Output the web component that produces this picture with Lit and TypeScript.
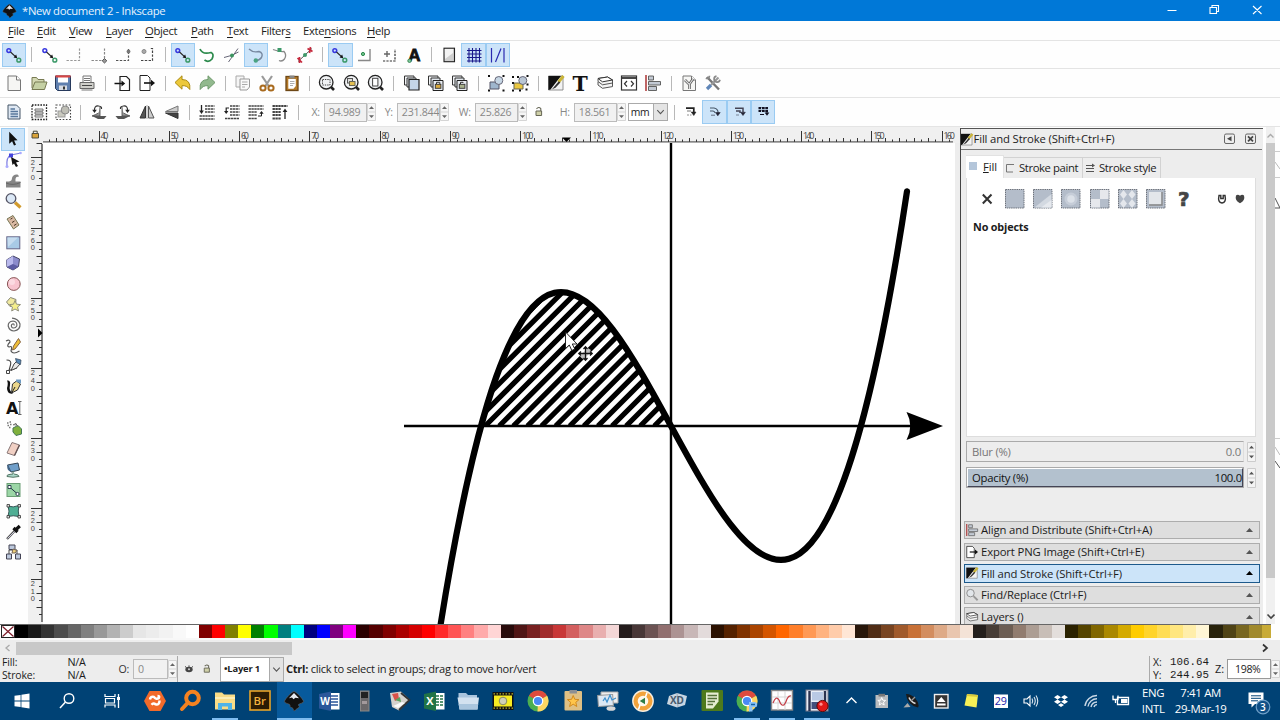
import { LitElement, html, svg, css, nothing } from "lit";
import { customElement, property } from "lit/decorators.js";
import { classMap } from "lit/directives/class-map.js";
import { styleMap } from "lit/directives/style-map.js";

// the small "node -> node" glyph is shared by several snap buttons
const snap = svg`
  <circle cx="6.8" cy="7.6" r="1.9" fill="none" stroke="#3838e0" stroke-width="1.5"/>
  <circle cx="16.8" cy="17.2" r="1.9" fill="none" stroke="#3d9a6a" stroke-width="1.5"/>
  <path d="M8.5 9L13.5 13.6" stroke="#222" stroke-width="1.1"/>
  <path d="M15.2 15.2L11.6 14.4L14.2 11.6Z" fill="#111"/>`;
const chrome = svg`
  <circle cx="12" cy="12" r="10.5" fill="#4caf50"/>
  <path d="M12 12L2.9 6.8A10.5 10.5 0 0 1 21.1 6.8Z" fill="#dd4b3e"/>
  <path d="M12 12L21.1 6.8A10.5 10.5 0 0 1 11.5 22.5Z" fill="#fdd663"/>
  <circle cx="12" cy="12" r="5.3" fill="#fff"/><circle cx="12" cy="12" r="4.1" fill="#4a8af4"/>`;
const inkscape = svg`
  <path d="M12 2.5C10 2.5 3 10 2.5 12.2C2.2 14 5.5 14.4 7.5 15.4C9 16.3 7 17 8.5 18C10 19 11 18.6 11.3 20.4C11.5 22 13 22 14 20.6C14.6 19.6 17 19 17.3 17.8C17.6 16.6 15.6 16.4 16.6 15.4C18 14.4 21.8 14 21.5 12.2C21 10 14 2.5 12 2.5Z" fill="#111" stroke="#666" stroke-width=".6"/>
  <path d="M12 4L7 9.3L10 8.6L11.5 10.2L13.4 8.7L17 9.3Z" fill="#e6eaf0"/>`;
const page = svg`<path d="M6 5H14.5L18.5 9V19.5H6Z" fill="#f6f6f4" stroke="#777"/><path d="M14.5 5V9H18.5" fill="#fff" stroke="#777"/>`;
const lens = svg`<circle cx="11.2" cy="11.2" r="6.8" fill="#f0f2f4" stroke="#222" stroke-width="1.3"/><path d="M16 16L19 19" stroke="#222" stroke-width="2.6"/>`;
const align = svg`<path d="M5 4V20" stroke="#a33" stroke-width="1.5"/><path d="M7.5 5H12.5V9H7.5ZM7.5 10.5H19.5V14H7.5ZM7.5 15.5H15.5V19.5H7.5Z" fill="#c3cad4" stroke="#555" stroke-width=".9"/>`;
const brush = svg`<path d="M4.5 5H19V19H4.5Z" fill="#f3f3f3" stroke="#777" stroke-width=".8"/><path d="M4.5 5H17L6.5 18.5L4.5 19Z" fill="#111"/><path d="M19.5 5L14.5 11" stroke="#c9b437" stroke-width="3"/><path d="M14.8 10.2L8 18.2L11.5 16.8L16.4 11.5Z" fill="#333"/>`;
const layers = svg`<path d="M5 7.5L14.5 6L19.5 9L9.5 10.8Z" fill="#fff" stroke="#333"/><path d="M5 7.5V10.5L9.5 13.8L19.5 12V9M5 10.8V14L9.5 17.3L19.5 15.6V12" fill="#f4f4f4" stroke="#444" stroke-width=".9"/><path d="M5 7.5L14.5 6L19.5 9L9.5 10.8Z" fill="#fff" stroke="#333"/>`;
const exportPage = svg`<path d="M5 4.5H12.5L15 7V19.5H5Z" fill="#fff" stroke="#222"/><path d="M9 12H18" stroke="#111" stroke-width="1.6"/><path d="M16 8.8L20 12L16 15.2Z" fill="#111"/>`;
const pick = svg`<path d="M8.2 4.8V16.8L11.1 14.2L13 18.6L15 17.7L13.1 13.5L16.6 13.2Z" fill="#111"/>`;
const copies = svg`<path d="M4.5 5H14V14H4.5Z" fill="#f1f3f6" stroke="#333"/><path d="M7 7H16V16H7Z" fill="#e3e8ee" stroke="#333"/>`;
const hatchBox = svg`<rect x="2.5" y="2.5" width="18.5" height="18.5" fill="#b4bdca" stroke="#6d727c" stroke-dasharray="1.5 .7"/>`;
const moveLines = svg`<path d="M10 6H19.5M10 9H19.5M10 12H19.5M4.5 16H19.5M4.5 19H19.5" stroke="#444" stroke-width="1.6" stroke-dasharray="2.4 .5"/>`;

const icons: Record<string, unknown> = {
  snap,
  inkscape,
  bbox: svg`<path d="M4.5 17.5H17.5V5.5" fill="none" stroke="#999" stroke-width="1.2" stroke-dasharray="2.4 1.4"/>`,
  bboxCorner: svg`<path d="M4.5 17.5H17.5V5.5" fill="none" stroke="#888" stroke-width="1.2" stroke-dasharray="2.4 1.4"/><path d="M17.5 15.5L19.8 17.8L17.5 20L15.2 17.8Z" fill="#999" stroke="#555"/>`,
  bboxEdge: svg`<path d="M5 17.5H17.5V6" fill="none" stroke="#555" stroke-width="1.2" stroke-dasharray="2.4 1.4"/><circle cx="17.5" cy="8.5" r="1.9" fill="#777"/>`,
  bboxMid: svg`<path d="M6 17.5H17.5V5.5H15" fill="none" stroke="#444" stroke-width="1.2" stroke-dasharray="2.4 1.4"/><circle cx="9" cy="8.5" r="2" fill="#aaa" stroke="#888"/>`,
  path: svg`<path d="M5 6Q7.5 12 16 9.5Q19.5 11 17 16Q13.5 20 9.5 17" fill="none" stroke="#2c8a4c" stroke-width="1.7"/>`,
  cross: svg`<path d="M4 14.5Q12 13 18.5 9M8.5 19L18 5.5" stroke="#667" fill="none"/><circle cx="12" cy="12.5" r="2" fill="#3c9460"/>`,
  cusp: svg`<path d="M5 6Q9 10 15 8.5Q19.5 10 17.5 14.5Q15 18 10.5 17.5" stroke="#7788a0" fill="none" stroke-width="1.4"/><circle cx="11.8" cy="17.5" r="2.2" fill="#4aa382"/>`,
  smooth: svg`<path d="M5 6.5Q11 9 16 8.5Q19 12 16.5 16Q14 19 11 17.5" stroke="#888" fill="none" stroke-width="1.3"/><rect x="9.5" y="5" width="4" height="4" fill="#3d9a6a"/>`,
  midline: svg`<path d="M5 18.5L19 5.5" stroke="#555"/><path d="M4.5 15L9 19.5M14.5 5.5L19.5 8.5M17.5 4L16.5 10M6.5 14V20" stroke="#c5283c" stroke-width="1.7"/><circle cx="12" cy="12" r="2" fill="#3d9a6a"/>`,
  objMid: svg`<path d="M5 17.5H17V6" stroke="#888" fill="none" stroke-width="1.4"/><circle cx="10" cy="11" r="1.6" fill="#6fc28d" stroke="#2c8a4c"/>`,
  rotCenter: svg`<path d="M6 18H18V6" fill="none" stroke="#333" stroke-width="1.2" stroke-dasharray="2.2 1.2"/><path d="M7 11H13M10 8V14" stroke="#666" stroke-width="1.4"/>`,
  bigA: svg`<text x="6.3" y="18" font-family="Liberation Sans, sans-serif" font-weight="700" font-size="17" fill="#111" stroke="#111" stroke-width=".8">A</text><circle cx="7.5" cy="17.8" r="1.7" fill="#7cc79a" stroke="#3d8a5a"/>`,
  pageBorder: svg`<rect x="7" y="5.2" width="10.5" height="13.5" fill="#cfcfcf" stroke="#222" stroke-width="1.1"/><path d="M7.8 6H16V10L8 16Z" fill="#f3f3f3"/>`,
  grid: svg`<path d="M7 5V19.5M10.5 5V19.5M14 5V19.5M17.5 5V19.5M5 7.5H19.5M5 11H19.5M5 14.5H19.5M5 18H19.5" stroke="#1a1a8c" stroke-width="1.1"/>`,
  guides: svg`<path d="M5.5 5V19.5M18 5V19.5M9.5 19L15 5.5" stroke="#2a2ab0" stroke-width="1.2"/>`,

  new: page,
  open: svg`<path d="M5 17V6.5H9.5L11 8.5H17V11" fill="#d3d8b2" stroke="#777a52"/><path d="M5 18.5L8 11H20L17.5 18.5Z" fill="#c5d0a4" stroke="#777a52"/>`,
  save: svg`<path d="M4.5 5H19.5V19.5H6.5L4.5 17.5Z" fill="#5f7fae" stroke="#26395c"/><path d="M7 5.5H17V11.5H7Z" fill="#fff"/><path d="M4.5 5.4H19.5" stroke="#d64545" stroke-width="2.2"/><path d="M8 14.5H16V19H8Z" fill="#d7dbe2"/><path d="M13 15.5V18.5" stroke="#222" stroke-width="1.8"/>`,
  print: svg`<path d="M8 11V5H16V11" fill="#fff" stroke="#777"/><path d="M5 11.5H19V17.5H5Z" fill="#cfcfca" stroke="#666"/><path d="M6.5 19H17.5M9 7.5H15M9 9.5H15" stroke="#777"/><path d="M7 14.5H17" stroke="#444"/>`,
  import: svg`<path d="M9 5.5H15.5L18.5 8.5V19.5H9Z" fill="#fff" stroke="#222" stroke-width="1.2"/><path d="M3.5 12.5H12" stroke="#111" stroke-width="1.5"/><path d="M10.5 9.5L14.2 12.5L10.5 15.5Z" fill="#111"/>`,
  export: exportPage,
  undo: svg`<path d="M4 11.5L11 4.8V8.5Q20 8.5 18.8 18.5Q16 14.2 11 14.7V18.2Z" fill="#ecc83a" stroke="#ab8b12"/>`,
  redo: svg`<path d="M20 11.5L13 4.8V8.5Q4 8.5 5.2 18.5Q8 14.2 13 14.7V18.2Z" fill="#92b98e" stroke="#6f9a6c"/>`,
  copy: svg`<path d="M5 5H13V16H5Z" fill="#f5f5f5" stroke="#aaa"/><path d="M9 8H18.5V16L16 19H9Z" fill="#fafafa" stroke="#999"/><path d="M11 11H16.5M11 13.5H16.5M11 16H14" stroke="#aaa"/>`,
  cut: svg`<path d="M7 5L14 15.5M17 5L10 15.5" stroke="#9a9a9a" stroke-width="2.2"/><circle cx="8" cy="17" r="2.6" fill="none" stroke="#a86a1e" stroke-width="2"/><circle cx="16" cy="17" r="2.6" fill="none" stroke="#a86a1e" stroke-width="2"/>`,
  paste: svg`<rect x="6" y="5.5" width="12" height="14" fill="#b47a28" stroke="#6d4716" stroke-width="1.3"/><path d="M8.3 8H15.8V15L13.5 17.8H8.3Z" fill="#fff"/><path d="M9.5 4.5H14.5V7.5H9.5Z" fill="#888"/><path d="M10 10.5H14.5M10 12.5H14.5M10 14.5H13" stroke="#999" stroke-width=".8"/>`,
  zoomSel: svg`${lens}<rect x="7.5" y="8.5" width="7.5" height="5.5" fill="none" stroke="#444" stroke-dasharray="1.4 1"/>`,
  zoomDraw: svg`${lens}<rect x="7.5" y="7.5" width="5" height="4.5" fill="#ddd" stroke="#555"/><rect x="9.5" y="10.5" width="5.5" height="4" fill="#e5c052" stroke="#665"/>`,
  zoomPage: svg`${lens}<rect x="8.6" y="7.3" width="5.3" height="7.7" fill="#fff" stroke="#444"/>`,
  duplicate: svg`${copies}<path d="M9 8.5H19V19H9Z" fill="#c4d5e8" stroke="#222" stroke-width="1.2"/>`,
  clone: svg`${copies}<path d="M9 9.5H19V19.5H9Z" fill="#e9edf2" stroke="#222"/><rect x="11.3" y="13.3" width="5.6" height="4" fill="#d9a93c" stroke="#333" stroke-width=".9"/><path d="M12.5 13V11.3H15.8V13" stroke="#333" fill="none"/>`,
  unlink: svg`${copies}<path d="M9 9.5H19V19.5H9Z" fill="#e9edf2" stroke="#222"/><rect x="11.3" y="13.3" width="5.6" height="4" fill="#a9b28c" stroke="#333" stroke-width=".9"/><path d="M12.5 13V11.3H15V12" stroke="#333" fill="none"/>`,
  group: svg`<path d="M6 11H15V18H6Z" fill="#9fb6cd" stroke="#556"/><circle cx="14.8" cy="9.5" r="4" fill="#c6d6e4" stroke="#667"/><path d="M4 5H6M18.5 5H20.5M4 19.5H6M18.5 19.5H20.5" stroke="#111" stroke-width="2"/>`,
  ungroup: svg`<path d="M6 12H15V18H6Z" fill="#ebc840" stroke="#665"/><circle cx="14.8" cy="9.5" r="4" fill="#b9c6d4" stroke="#667"/><path d="M4 6H6M9 6H11M18.5 5H20.5M4 12H6M4 19.5H6M11 19.5H13M17.5 18.5H19.5M18.5 13.5H20.5" stroke="#111" stroke-width="2"/>`,
  brush,
  text: svg`<text x="4.6" y="19.6" font-family="DejaVu Serif, serif" font-weight="700" font-size="20.5" fill="#111">T</text>`,
  layers,
  xml: svg`<rect x="4.5" y="5" width="15" height="14" fill="#fff" stroke="#333" stroke-width="1.2"/><path d="M5 7H19" stroke="#333" stroke-width="1.8"/><path d="M10 10L7.5 12.8L10 15.5M14 10L16.5 12.8L14 15.5" fill="none" stroke="#333" stroke-width="1.2"/>`,
  align,
  docProps: svg`${page}<path d="M8 9L12.5 13.5V18M16 8L12.5 13" fill="none" stroke="#555" stroke-width="2.6"/><path d="M8 9L12.5 13.5V18M16 8L12.5 13" fill="none" stroke="#ddd" stroke-width="1.2"/>`,
  prefs: svg`<path d="M6 6L18 18.5" stroke="#777" stroke-width="2.4"/><path d="M17.5 6.5L10 14" stroke="#999" stroke-width="2.2"/><path d="M10 14L6 18" stroke="#5f86b8" stroke-width="3.2"/><path d="M15.5 5.2A3 3 0 1 0 19 8.8M4.8 7.2A2.6 2.6 0 0 0 8.5 4.8" stroke="#888" fill="none" stroke-width="1.7"/>`,

  selAll: svg`<path d="M6 5H14.5L18 8.5V19H6Z" fill="#dfe8f3" stroke="#456"/><path d="M8.5 9H13M8.5 11.5H16M8.5 14H16M8.5 16.5H16" stroke="#58779c" stroke-width="1.5"/>`,
  selLayers: svg`<rect x="5" y="5" width="14.5" height="14.5" fill="none" stroke="#222" stroke-width="1.3" stroke-dasharray="1.6 1.2"/><path d="M8 9H16V11H8ZM8 12H16V14H8ZM8 15H16V17H8Z" fill="#eee" stroke="#555" stroke-width=".8"/>`,
  deselect: svg`<rect x="5" y="5" width="14.5" height="14.5" fill="none" stroke="#444" stroke-width="1.1" stroke-dasharray="1.6 1.6"/><rect x="7" y="11" width="7" height="6" fill="#c9c9bf" stroke="#999"/><circle cx="14.2" cy="10" r="4" fill="#bfbfb6" stroke="#888"/>`,
  rotL: svg`<path d="M7.5 11Q7 5.5 11.5 6Q15 6.5 14.5 9" fill="none" stroke="#333" stroke-width="1.2"/><path d="M5.2 9.8H9.8L7.5 13Z" fill="#222"/><path d="M13 7V16H5Q9 14.5 11.5 13" fill="#999" stroke="#444" stroke-width=".8"/><path d="M5 16H19.5L17 19H11Z" fill="#555"/>`,
  rotR: svg`<path d="M16.5 11Q17 5.5 12.5 6Q9 6.5 9.5 9" fill="none" stroke="#333" stroke-width="1.2"/><path d="M14.2 9.8H18.8L16.5 13Z" fill="#222"/><path d="M11 7V16H19Q15 14.5 12.5 13" fill="#999" stroke="#444" stroke-width=".8"/><path d="M4.5 16H19L13 19H7Z" fill="#555"/>`,
  flipH: svg`<path d="M10.5 6V18H5Z" fill="#555" stroke="#333"/><path d="M13.5 6V18H19Z" fill="#ccc" stroke="#555"/><path d="M12 5V19" stroke="#888" stroke-width=".7"/>`,
  flipV: svg`<path d="M18 11.5H5.5L18 6Z" fill="#ccc" stroke="#777"/><path d="M18 13H5.5L18 18.5Z" fill="#444" stroke="#333"/>`,
  lowerBottom: svg`${moveLines}<path d="M6.5 5V12" stroke="#222" stroke-width="1.3"/><path d="M4.2 10.5H8.8L6.5 14Z" fill="#222"/>`,
  lower: svg`<path d="M10 6H19.5M10 9H19.5M10 12H19.5M10 15H19.5M5 18.5H19.5" stroke="#444" stroke-width="1.6" stroke-dasharray="2.4 .5"/><path d="M9 8H6.2V12" stroke="#222" stroke-width="1.2" fill="none"/><path d="M4 11H8.4L6.2 14Z" fill="#222"/>`,
  raise: svg`<path d="M4.5 6H19.5M4.5 9H19.5M4.5 12H13M4.5 15H13M4.5 18.5H13" stroke="#444" stroke-width="1.6" stroke-dasharray="2.4 .5"/><path d="M14 16H17.5V13" stroke="#222" fill="none"/><path d="M15.3 13.8H19.7L17.5 11Z" fill="#222"/>`,
  raiseTop: svg`<path d="M4.5 6H19.5M4.5 9H13M4.5 12H13M4.5 15H13M4.5 18.5H13" stroke="#444" stroke-width="1.8" stroke-dasharray="2.4 .5"/><path d="M17 19V10.5" stroke="#222" stroke-width="1.3"/><path d="M14.6 12H19.4L17 8.5Z" fill="#222"/>`,
  lock: svg`<path d="M9 11H14.6V15.5H9Z" fill="#cfd0a8" stroke="#665"/><path d="M9.5 8.9Q11.7 6.4 13.8 8.6V11" fill="none" stroke="#665" stroke-width="1.1"/>`,
  scaleStroke: svg`<path d="M8 8.2H15.8V12" fill="none" stroke="#222" stroke-width="1.7"/><path d="M9 11H13" stroke="#777"/><path d="M13.2 12H18L15.8 15.6ZM9 15H11M12 15H13.5" fill="#222" stroke="#222" stroke-width=".5"/>`,
  scaleCorner: svg`<path d="M8 8H12Q16.4 9 16 13M8 11H11Q13 11.5 13 13" fill="none" stroke="#456" stroke-width="1.1"/><path d="M13.6 12.6H18.2L15.8 15.8ZM9 15.2H13" fill="#223" stroke="#223" stroke-width=".6"/>`,
  scaleGrad: svg`<path d="M8 8.2H16V12M9 11H13V13" fill="none" stroke="#445" stroke-width="1.5"/><path d="M13.6 12.2H18.4L16 15.6ZM9 15H12" fill="#223" stroke="#223" stroke-width=".5"/>`,
  scalePattern: svg`<path d="M7.5 8H17M7.5 10.8H17" stroke="#112" stroke-width="2.2" stroke-dasharray="2.8 .6"/><path d="M16 11V13M9 14.5H13" stroke="#112"/><path d="M13.6 12.4H18.4L16 15.8Z" fill="#112"/>`,

  pick,
  node: svg`<path d="M6 18.5Q5 9 10 7L20 5" fill="none" stroke="#7d7de0" stroke-width="1.2"/><path d="M8 5.5H12V9.5H8Z" fill="#4444dd"/><circle cx="6" cy="18.5" r="1.5" fill="#aaf"/><circle cx="19.5" cy="5" r="1.3" fill="#aaf"/><path d="M10 9L18.5 13.5L15 14.5L17 18L15 19L13 15.5L11.5 17Z" fill="#111"/>`,
  tweak: svg`<path d="M5 12.5H8Q11 12 11 9Q12 5 16.5 5.5Q18.5 6.5 17.5 8Q14 7 14.5 12.5H19.5V18.5H5Z" fill="#858585"/><path d="M5 14Q12 17 19.5 13.5" stroke="#666" fill="none"/>`,
  zoom: svg`<path d="M14 13.5L19.5 18.5" stroke="#d19a2c" stroke-width="3.2"/><circle cx="10" cy="9.5" r="4.8" fill="#dbe8f6" stroke="#556" stroke-width="1.3"/>`,
  measure: svg`<path d="M6 9L12 5.5L18 15L12.5 19Z" fill="#d9b9a3" stroke="#775"/><path d="M11.5 8L9.5 9.2M13.5 11L11 12.5M15.5 14L13 15.5" stroke="#432"/>`,
  rect: svg`<rect x="5.8" y="5.8" width="13" height="12" fill="#a8cae6" stroke="#668"/><path d="M6.5 6.5H17L7 16Z" fill="#c6dcef"/>`,
  box3d: svg`<path d="M12 5L18.5 8L17.5 15.5L12 19L6 16L5.5 9Z" fill="#8b8bcb" stroke="#446"/><path d="M12 5V13L6 16L5.5 9Z" fill="#b9b9ec"/><path d="M12 13L17.5 15.5L12 19L6 16Z" fill="#5c5ca3"/>`,
  ellipse: svg`<circle cx="12.8" cy="12" r="6.4" fill="#f8c4cf" stroke="#855"/><circle cx="11" cy="10" r="3" fill="#fbdae1"/>`,
  star: svg`<path d="M9.5 5.5L15 7.5L14.5 13L9 14.5L5.5 10Z" fill="#f0e9a0" stroke="#887"/><path d="M14 8.5L15.5 12.2L19.5 12.6L16.6 15L17.5 19L14 17L10.7 19L11.4 15L8.5 12.6L12.5 12.2Z" fill="#f4ee8b" stroke="#887" stroke-width=".9"/>`,
  spiral: svg`<path d="M13 12.5Q13.5 10.5 11.5 11Q9.5 12 11 14.5Q14 16 15.8 13Q16.5 8.5 12 8Q7 8.5 7.2 13Q8.5 18 13 18Q19.5 17 19 11Q17 5.5 11 5.2" fill="none" stroke="#666" stroke-width="1.2"/>`,
  pencil: svg`<path d="M5 7Q9 5 9 8Q5 12 8 13Q12 11 10 17Q12 21 18.5 17" fill="none" stroke="#555" stroke-width="1.2"/><path d="M17.5 4.5L19.5 8L14 15L11.5 16L12.5 12Z" fill="#eebd37" stroke="#864"/>`,
  pen: svg`<path d="M5.5 6Q11 6 9.5 11L8 16.5L16 14" fill="none" stroke="#444" stroke-width="1.1"/><path d="M13 10L16 7L19 10L15.5 14L10 16.5Z" fill="#e8e8e8" stroke="#444"/><path d="M14.5 4.5L20 6L19.5 10.5L15.5 8.5Z" fill="#5587b5" stroke="#345" stroke-width=".7"/><path d="M5.5 16.5H8.5V19.5H5.5Z" fill="#fff" stroke="#444"/>`,
  calligraphy: svg`<path d="M6 5.5Q10 5 9 10Q7.5 16 12 18.5Q6 19.5 6 13Q7.5 8 6 5.5Z" fill="#111"/><path d="M11.5 9L15.5 6L19.5 9L16.5 15L10.5 18Z" fill="#ead68b" stroke="#333"/><path d="M14 12L11 17.5" stroke="#222"/><path d="M15 4.5H20V8.5L15.5 7Z" fill="#6d9ac2"/>`,
  textTool: svg`<text x="5" y="18" font-family="DejaVu Sans, sans-serif" font-weight="700" font-size="16" fill="#111">A</text><path d="M18.8 5.5V18.5M17 5.5H20.5M17 18.5H20.5" stroke="#555" stroke-width=".9"/>`,
  spray: svg`<path d="M12 12L17 9.5L20.5 13V18L15 19.5L12 16Z" fill="#7fb03c" stroke="#475"/><path d="M12 9L15 7.5L16.5 10.5" fill="#bbb" stroke="#666"/><path d="M6 7H7.5M8.5 6H10M6.5 9.5H8M9 8.5H10.5M8 11.5H9.5" stroke="#777" stroke-width="1.4"/>`,
  eraser: svg`<path d="M11 5.5L18.5 8L13.5 18.5L6 16Z" fill="#f1d0c4" stroke="#877"/><path d="M18.5 8L13.5 18.5" stroke="#655" stroke-width="1.4"/>`,
  bucket: svg`<path d="M6.5 7L17 5L18.5 12L10 14Z" fill="#6f9ec9" stroke="#345"/><path d="M6.5 7Q5 12 10 14" fill="#3c6288"/><path d="M12 13V16Q5 16.5 6 18.5Q12 20 18 18.5Q18 16.5 13 16" fill="#a9d6c8" stroke="#576"/>`,
  gradient: svg`<rect x="6" y="5.5" width="13" height="13" fill="#9bd6a6" stroke="#6b9e75"/><path d="M8.5 9L16 15.5" stroke="#234"/><path d="M7 7.5H10V10.5H7Z" fill="#fff" stroke="#345"/><circle cx="16.5" cy="16" r="1.6" fill="#fff" stroke="#345"/>`,
  mesh: svg`<path d="M7 7Q12 9 18 6.5Q16.5 12 18 17.5Q12 16 7 17.5Q9 12 7 7Z" fill="#4fae94" stroke="#355"/><path d="M6 5.5H8.5V8H6ZM17 5.5H19.5V8H17ZM6 16.5H8.5V19H6ZM17 16.5H19.5V19H17Z" fill="#ddd" stroke="#333" stroke-width=".8"/>`,
  dropper: svg`<path d="M6 19L14.5 10" stroke="#555" stroke-width="2.4"/><path d="M6.5 18.5L14 11" stroke="#ccd" stroke-width="1"/><path d="M12.5 8L16.5 12M14.5 10L18.8 6" stroke="#111" stroke-width="3.2"/>`,
  connector: svg`<path d="M8 15V10H16V15" fill="none" stroke="#444"/><path d="M5.5 14H10.5V19H5.5ZM14.5 14H19.5V19H14.5Z" fill="#bcc8dc" stroke="#445"/><path d="M8 5H14V9.5H8Z" fill="#bcc8dc" stroke="#445"/><path d="M12 9L16 10.5L14 13H11Z" fill="#eccf7c" stroke="#765"/>`,

  none: svg`<path d="M7.8 7.5L16.5 16.5M16.5 7.5L7.8 16.5" stroke="#333" stroke-width="2"/>`,
  flat: hatchBox,
  linear: svg`${hatchBox}<path d="M3.5 20.5L20.5 7V20.5Z" fill="#d3d9e1"/><path d="M10 20.5L20.5 13V20.5Z" fill="#e6e9ee"/>`,
  radial: svg`${hatchBox}<circle cx="12" cy="12" r="6.5" fill="#c6cdd8"/><circle cx="12" cy="12" r="3.8" fill="#dce1e8"/>`,
  meshFill: svg`${hatchBox}<path d="M12 3H20.5V12H12ZM3 12H12V20.5H3Z" fill="#e6e8ec"/>`,
  patternFill: svg`${hatchBox}<path d="M7.5 3L11 7.5L7.5 12L4 7.5ZM16 3L19.5 7.5L16 12L12.5 7.5ZM7.5 12L11 16.5L7.5 21L4 16.5ZM16 12L19.5 16.5L16 21L12.5 16.5Z" fill="#e4e7ec"/>`,
  swatchFill: svg`${hatchBox}<path d="M5 5H17.5V17.5H5Z" fill="#e3e6ea"/><path d="M5 18H18V5" fill="none" stroke="#888" stroke-width="1.4"/>`,
  unset: svg`<text x="6" y="19" font-family="DejaVu Sans, sans-serif" font-weight="700" font-size="20" fill="#444" stroke="#444" stroke-width=".7">?</text>`,
  evenodd: svg`<path d="M9 8.5Q7.5 15.5 12 16Q16.5 15.5 15 8.5L13.2 8.4V11.5H10.8V8.4Z" fill="none" stroke="#333" stroke-width="1.4"/>`,
  nonzero: svg`<path d="M8 8.5Q10 7 12 8.8Q14 7 16 8.5Q17.5 13.5 12 16.2Q6.5 13.5 8 8.5Z" fill="#444"/>`,
  findIcon: svg`<circle cx="10" cy="9.5" r="5" fill="#e2e6ea" stroke="#888" stroke-width="1.2"/><path d="M14 13.5L19.5 19" stroke="#999" stroke-width="2.5"/>`,
  eye: svg`<ellipse cx="12" cy="12.5" rx="4" ry="3" fill="#444"/><path d="M8 9L9.3 11M12 8V10M16 9L14.7 11" stroke="#444"/><circle cx="12" cy="12.3" r="1" fill="#ddd"/>`,

  start: svg`<path d="M4.5 6.7L10.6 5.9V11.6H4.5ZM11.4 5.8L19.5 4.6V11.6H11.4ZM4.5 12.4H10.6V18.1L4.5 17.3ZM11.4 12.4H19.5V19.4L11.4 18.2Z" fill="#fff"/>`,
  search: svg`<circle cx="14" cy="9.5" r="4.8" fill="none" stroke="#fff" stroke-width="1.4"/><path d="M10.5 13L5 19" stroke="#fff" stroke-width="1.5"/>`,
  taskview: svg`<path d="M5 5V7.5H15V5M5 18.5V16H15V18.5M5.5 9.5H14.5V14H5.5Z" fill="none" stroke="#fff" stroke-width="1.2"/><path d="M18.5 5V8M18.5 11V19" stroke="#fff" stroke-width="1.3"/><path d="M17 8H20V11H17Z" fill="#fff"/>`,
  hex: svg`<path d="M6.5 2H17.5L23 12L17.5 22H6.5L1 12Z" fill="#f26a2a"/><path d="M7 10.5Q7.5 7 11 8Q13.5 11 15.8 9Q17 7 14.5 7M16.5 11.5Q16.5 16.5 12.5 15.3Q10.5 13.5 8.5 15.8" fill="none" stroke="#fff" stroke-width="2.5"/>`,
  everything: svg`<circle cx="14.5" cy="9" r="6.3" fill="none" stroke="#f58220" stroke-width="4"/><path d="M10 13.5L4 20" stroke="#f58220" stroke-width="4" stroke-linecap="round"/>`,
  explorer: svg`<path d="M2 3.5H9L11 5.5H22V20.5H2Z" fill="#f9dc87"/><path d="M2 8H22V10H2Z" fill="#fdeeb5"/><path d="M5 21V14H19V21H15V17.5H9V21Z" fill="#4fb3e8"/>`,
  bridge: svg`<rect x="3" y="2" width="20" height="19" fill="#2b1c04" stroke="#e8a428" stroke-width="1.6"/><text x="6.5" y="15.8" font-family="Open Sans, sans-serif" font-weight="600" font-size="11.5" fill="#f1b13e">Br</text>`,
  word: svg`<path d="M12 4H22.5V20.5H12Z" fill="#fff"/><path d="M14 7H21M14 10H21M14 13H21M14 16H21" stroke="#2b579a" stroke-width="1.3"/><path d="M2 5L14 2.5V22L2 19.5Z" fill="#2b579a"/><text x="3.2" y="16" font-family="Open Sans, sans-serif" font-weight="700" font-size="10" fill="#fff">W</text>`,
  tower: svg`<rect x="8.5" y="2" width="8.5" height="20" fill="#6a686a" stroke="#888"/><path d="M9 3H16V9H9Z" fill="#222"/><path d="M10 12H15V15H10Z" fill="#a39a9c"/>`,
  parrot: svg`<path d="M3 4L14 2.5L23 11L12 21.5L5 18Z" fill="#d5d2cd"/><path d="M5 5L11 4L12 10L8 12Z" fill="#d8524a"/><path d="M8 11L13 8L14 13Z" fill="#59a35e"/><path d="M14 4L22.5 11L12 21" fill="none" stroke="#333" stroke-width="1.8"/><path d="M6 17L15 13L18 14L11 19Z" fill="#fafafa"/>`,
  excel: svg`<path d="M12 4H22.5V20.5H12Z" fill="#fff"/><path d="M14 7H21M14 10H21M14 13H21M14 16H21" stroke="#217346" stroke-width="1.6"/><path d="M17.5 5V19" stroke="#fff"/><path d="M2 5L14 2.5V22L2 19.5Z" fill="#217346"/><text x="4.2" y="16" font-family="Open Sans, sans-serif" font-weight="700" font-size="11" fill="#fff">X</text>`,
  folder: svg`<path d="M2.5 4H10L12 6H21V9H2.5Z" fill="#a9c4dd"/><path d="M1.5 8.5H23L21.5 20.5H3.5Z" fill="#d3e2f0"/><path d="M2.6 15H22.2L21.5 20.5H3.5Z" fill="#aac6de"/>`,
  film: svg`<rect x="1.5" y="3" width="21" height="18" fill="#111"/><rect x="3" y="6.5" width="18" height="11" fill="#f7ec22"/><path d="M2.5 4.8H22M2.5 19.2H22" stroke="#b9b12a" stroke-width="1.3" stroke-dasharray="1.5 1.5"/><circle cx="12" cy="12" r="3.8" fill="#d0d0b8" stroke="#8a8a60"/>`,
  chrome,
  clipStar: svg`<rect x="3.5" y="2" width="17.5" height="19.5" rx="1" fill="#dfc084"/><path d="M8.5 1H16V4.5H8.5Z" fill="#8c8f93"/><path d="M12.2 6.5L13.8 10.3L18 10.6L14.8 13.3L15.8 17.5L12.2 15.2L8.6 17.5L9.6 13.3L6.4 10.6L10.6 10.3Z" fill="#ffc54a" stroke="#d38a1c"/>`,
  monitors: svg`<path d="M5 3H22V14H5Z" fill="#eee" stroke="#aaa"/><path d="M2 6H17V17H2Z" fill="#dce8f4" stroke="#999" transform="rotate(-4 9 11)"/><path d="M7 12L9 9L11 13L14 6L16 11L20 9" fill="none" stroke="#3d8fcc" stroke-width="1.2"/><ellipse cx="15" cy="19.5" rx="4.5" ry="2.3" fill="#d7d7d7"/>`,
  orangeSync: svg`<circle cx="12" cy="12" r="10.9" fill="#f8efe0"/><circle cx="12" cy="12" r="7.4" fill="#fdf7ec" stroke="#f2a33c" stroke-width="4.2"/><path d="M16 3.5L14.5 8M7.5 20.5L9 16" stroke="#fff" stroke-width="1.6" fill="none"/><path d="M8.8 12L14 8.8V15.2Z" fill="#2e7d46"/>`,
  xd: svg`<path d="M4 7L12 4L22 7L20 16L12 18.5L2 15Z" fill="#c9d6e2"/><path d="M12 4L13 18" stroke="#8b9cae" stroke-width=".8"/><text x="5" y="15" font-family="Open Sans, sans-serif" font-weight="700" font-size="10" fill="#475a6d">XD</text>`,
  greenNote: svg`<rect x="1.5" y="1" width="21.5" height="21" rx="1" fill="#4e7a1c"/><path d="M6 3.5H18.5V12.5L13 19.5H6Z" fill="#e6edd2"/><path d="M7.5 6.5H17M7.5 9.5H17M7.5 12.5H15M7.5 15.5H13" stroke="#55713a" stroke-width="1.3"/>`,
  chromeP: svg`${chrome}<path d="M14 22.5V13H20Q23.5 14 21.5 18H17.5V22.5Z" fill="#8cc4f4"/><path d="M16 15.5H20" stroke="#1464a5" stroke-width="1.5"/>`,
  graph: svg`<rect x="1.5" y="1.5" width="21" height="19.5" fill="#fff" stroke="#888" stroke-width="1.4"/><path d="M8 2V21M15 2V21M2 8H22M2 14H22" stroke="#d5d5d5"/><path d="M3 14Q6 6 9 11Q13 22 17 10Q19 6 21 7" fill="none" stroke="#c33d46" stroke-width="1.2"/>`,
  recorder: svg`<rect x="1" y="1" width="22" height="21" fill="#e9eef7" stroke="#778"/><path d="M4.5 2V22M20 2V22" stroke="#2b3350" stroke-width="2.4"/><rect x="7" y="3" width="11" height="8.5" fill="#b9c9e4"/><path d="M6.5 13H18V20H6.5Z" fill="#43507c"/><circle cx="17.5" cy="17" r="5.6" fill="#e01818" stroke="#5c0808"/><circle cx="16" cy="15.2" r="1.6" fill="#ff8f8f"/>`,
  up: svg`<path d="M7.5 14L12.5 9L17.5 14" fill="none" stroke="#fff" stroke-width="1.4"/>`,
  clip: svg`<rect x="6.5" y="6" width="12.5" height="13" fill="#b9bcbf"/><path d="M9.5 4.8H16V7.5H9.5Z" fill="#777"/><path d="M12.7 8.5L13.8 11.2L16.6 11.4L14.5 13.2L15.2 16L12.7 14.5L10.3 16L11 13.2L8.8 11.4L11.7 11.2Z" fill="none" stroke="#fff"/>`,
  dish: svg`<path d="M7 5Q8 16 19 18.5Q21 15 16 9Q11 4.5 7 5Z" fill="#1a1a1a"/><path d="M10 8.5Q12 13 16.5 14.5" stroke="#ddd" stroke-width="1.6" fill="none"/><path d="M12 12L16 8" stroke="#999" stroke-width="1.2"/><path d="M4.5 18.5L8.5 14L11.5 18Z" fill="#aaa"/>`,
  eject: svg`<rect x="5.5" y="5.5" width="13.5" height="13.5" fill="#333" stroke="#eee" stroke-width="1.4"/><path d="M8 13L12.3 8L16.6 13ZM8 14.5H16.6V16.5H8Z" fill="#fff"/>`,
  sticky: svg`<path d="M8 5L19 6L17.5 18.5L5.5 16.5Z" fill="#f7f056"/><path d="M8 5L19 6L18.8 8L7.6 7Z" fill="#d6c93e"/>`,
  cal29: svg`<rect x="5" y="5.5" width="14" height="13.5" fill="#fff"/><text x="5.8" y="16.3" font-family="Open Sans, sans-serif" font-size="10.8" letter-spacing="-.2" fill="#22a">29</text>`,
  volume: svg`<path d="M5 10H8L11 7V17L8 14H5Z" fill="none" stroke="#fff" stroke-width="1.1"/><path d="M13 9.5Q14.5 12 13 14.5M15 8Q17.5 12 15 16M17 6.5Q20.5 12 17 17.5" fill="none" stroke="#dfe8f0" stroke-width="1.1"/>`,
  dropbox: svg`<path d="M8.5 6L12 8.2L8.5 10.4L5 8.2ZM15.5 6L19 8.2L15.5 10.4L12 8.2ZM8.5 10.6L12 12.8L8.5 15L5 12.8ZM15.5 10.6L19 12.8L15.5 15L12 12.8ZM12 14.2L15 16L12 18L9 16Z" fill="#fff"/>`,
  wifi: svg`<path d="M6 17A12 12 0 0 1 18 6.5M9 17.5A9 9 0 0 1 18 9.8M12 18A6.2 6.2 0 0 1 18 13M15 18A3.2 3.2 0 0 1 18 15.6" fill="none" stroke="#c9d8e6" stroke-width="1.4"/>`,
  battery: svg`<path d="M8.5 8.5H19.5V15.5H8.5Z" fill="none" stroke="#fff" stroke-width="1.3"/><path d="M12 10H18.5V14H12Z" fill="#fff"/><path d="M4 6.5V10.5H9V6.5M6.5 10.5V14" stroke="#fff" fill="none" stroke-width="1.3"/>`,
  notif: svg`<path d="M4.5 4.5H19.5V16H11L7.5 19.5V16H4.5Z" fill="#fff"/><path d="M7 7.8H17M7 10.3H17M7 12.8H14" stroke="#004275"/><circle cx="19" cy="19" r="6.8" fill="#0f4f86" stroke="#6fa0c8" stroke-width="1.2"/><text x="16.1" y="22.8" font-family="Open Sans, sans-serif" font-weight="600" font-size="10" fill="#fff">3</text>`,
};

@customElement("ink-icon")
class InkIcon extends LitElement {
  static styles = css`
    :host {
      display: inline-flex;
      flex: none;
      width: 24px;
      height: 24px;
    }
    svg {
      width: 100%;
      height: 100%;
      overflow: visible;
    }
  `;

  @property() name = "";

  render() {
    return html`<svg viewBox="0 0 24 24" fill="none">${icons[this.name] ?? nothing}</svg>`;
  }
}

// "|" is a separator, a leading "*" marks a pressed toggle
const SNAP_BAR =
  "*snap | snap bbox bboxCorner bboxEdge bboxMid | *snap path cross *cusp smooth midline | *snap objMid rotCenter bigA | pageBorder *grid *guides";
const COMMAND_BAR =
  "new open save print | import export | undo redo | copy cut paste | zoomSel zoomDraw zoomPage | duplicate clone unlink | group ungroup | brush text layers xml align | docProps prefs";
const SELECT_BAR = "selAll selLayers deselect | rotL rotR flipH flipV | lowerBottom lower raise raiseTop |";

@customElement("ink-toolbar")
class InkToolbar extends LitElement {
  static styles = css`
    :host {
      display: flex;
      align-items: center;
      flex: none;
    }
    .cell {
      width: 24.4px;
      height: 24px;
      flex: none;
      box-sizing: border-box;
      display: flex;
      align-items: center;
      justify-content: center;
    }
    .on {
      background: #cce4f9;
      outline: 1px solid #9acbf2;
      outline-offset: -1px;
    }
    .sep {
      width: 1px;
      height: 15px;
      margin: 0 5.1px;
      flex: none;
      background: #b8b8b8;
    }
  `;

  @property() items = "";

  render() {
    return this.items.split(" ").map((item) =>
      item === "|"
        ? html`<div class="sep"></div>`
        : html`<div class=${classMap({ cell: true, on: item[0] === "*" })}>
            <ink-icon name=${item.replace("*", "")}></ink-icon>
          </div>`
    );
  }
}

const CENTER = 671;
const AXIS = 426;
const K = 134 / (109.7 * (36100 - 109.7 ** 2));

// y(u) = AXIS - K * (u^3 - 190^2 u), which a single bezier segment draws exactly
function cubic(a: number, b: number) {
  const f = (u: number) => AXIS - K * (u ** 3 - 36100 * u);
  const d = (u: number) => -K * (3 * u * u - 36100);
  const h = (b - a) / 3;
  const p = (x: number, y: number) => `${(CENTER + x).toFixed(2)} ${y.toFixed(2)}`;
  return `M${p(a, f(a))}C${p(a + h, f(a) + d(a) * h)} ${p(b - h, f(b) - d(b) * h)} ${p(b, f(b))}`;
}

@customElement("ink-canvas")
class InkCanvas extends LitElement {
  static styles = css`
    :host {
      display: grid;
      grid-template: 16px 1fr / 15px 1fr;
      background: #fff;
      overflow: hidden;
    }
    svg {
      display: block;
      width: 100%;
      height: 100%;
    }
    .corner,
    .ruler {
      background: #f0f0f0;
    }
    text {
      font: 9px "Open Sans", sans-serif;
      letter-spacing: 0;
      fill: #444;
    }
    .digit {
      font: 7.4px "Liberation Sans", sans-serif;
    }
    .ticks {
      stroke: #333;
    }
  `;

  _horizontal() {
    let ticks = "";
    for (let v = 33; v <= 161; v++) {
      const x = Math.round(98.6 + (v - 40) * 7.025) + 0.5;
      if (x < 44 || x > 952) continue;
      ticks += `M${x} 15V${v % 10 === 0 ? 4 : v % 2 === 0 ? 11 : 12.5}`;
    }
    const labels = Array.from({ length: 13 }, (_, i) => 40 + i * 10);
    return svg`
      <path class="ticks" d=${ticks}/>
      <path d="M43 14.9H953" stroke="#444"/>
      <path d="M562 10.5H571L566.5 15Z" fill="#000"/>
      ${labels.map((v) => svg`<text x=${100.5 + (v - 40) * 7.025} y="11.5" textLength=${v < 100 ? 8 : 11.5}>${v}</text>`)}`;
  }

  _vertical() {
    let ticks = "";
    for (let v = 205; v <= 274; v++) {
      const y = Math.round(157.3 + (270 - v) * 7.02) + 0.5;
      if (y < 143 || y > 622) continue;
      ticks += `M42 ${y}H${v % 10 === 0 ? 31 : v % 2 === 0 ? 36.5 : 39}`;
    }
    const labels = [270, 260, 250, 240, 230, 220, 210];
    return svg`
      <path class="ticks" d=${ticks}/>
      <path d="M42 144V622" stroke="#333" stroke-width="1.2"/>
      <path d="M38 328.5V337.5L42.5 333Z" fill="#000"/>
      ${labels.map((v) =>
        String(v)
          .split("")
          .map((c, i) => svg`<text class="digit" x="30.8" y=${164.8 + (270 - v) * 7.02 + i * 7.6}>${c}</text>`)
      )}`;
  }

  _hatch() {
    let d = "";
    for (let i = -14; i < 9; i++) {
      const x = (555.6 + i * 14.1).toFixed(1);
      d += `M${x} ${AXIS}l145 -145`;
    }
    return d;
  }

  render() {
    return html`
      <div class="corner">
        <svg viewBox="28 127 15 16">
          <path d="M32 133.5H38.5V138H32Z" fill="#d9a33a" stroke="#443" stroke-width=".9" />
          <path d="M33.3 133V131.2H37.2V133" fill="none" stroke="#443" />
        </svg>
      </div>
      <div class="ruler"><svg viewBox="43 0 917 16" preserveAspectRatio="none">${this._horizontal()}</svg></div>
      <div class="ruler"><svg viewBox="28 143 15 481">${this._vertical()}</svg></div>
      <svg viewBox="43 143 917 481">
        <defs>
          <clipPath id="area"><path d="${cubic(-190, 0)}Z" /></clipPath>
        </defs>
        <path d="M955 143H960V624H955Z" fill="#ededed" />
        <path d=${this._hatch()} clip-path="url(#area)" stroke="#000" stroke-width="5.2" />
        <path d="M404 426H912M671 143V624" stroke="#000" stroke-width="2.4" />
        <path d="M943 426L906.5 412Q914 426 906.5 440Z" fill="#000" />
        <path d=${cubic(-233, 236)} fill="none" stroke="#000" stroke-width="6.2" stroke-linecap="round" />
        <path
          d="M565.5 332V348.5L569.3 345L571.8 350.5L574.8 349L572.3 344H577Z"
          fill="#fff"
          stroke="#111"
          stroke-width=".9"
        />
        <circle cx="585.5" cy="353.5" r="6" fill="#fff" opacity=".75" />
        <path
          d="M585.5 347V360M579 353.5H592M583.5 349L585.5 346.8L587.5 349M583.5 358L585.5 360.2L587.5 358M581 351.5L578.8 353.5L581 355.5M590 351.5L592.2 353.5L590 355.5"
          fill="none"
          stroke="#111"
          stroke-width="1.3"
        />
      </svg>
    `;
  }
}

@customElement("ink-dock")
class InkDock extends LitElement {
  static styles = css`
    :host {
      display: flex;
      flex-direction: column;
      box-sizing: border-box;
      background: #ededed;
      border-left: 1.5px solid #444;
      border-top: 1.5px solid #555;
      margin-top: 1px;
      overflow: hidden;
      font-size: 11.3px;
      letter-spacing: -0.14px;
      color: #1c1c1c;
    }
    .head {
      height: 21px;
      flex: none;
      display: flex;
      align-items: center;
      border-bottom: 1px solid #777;
      box-sizing: border-box;
      margin-right: 1px;
      gap: 8px;
      padding-right: 5px;
    }
    .head ink-icon {
      width: 19px;
      height: 19px;
      margin: 0 -10.5px 0 -4px;
    }
    .head .name {
      flex: 1;
    }
    .head svg {
      width: 13px;
      height: 12px;
    }
    .tabs {
      display: flex;
      align-items: flex-end;
      height: 23px;
      flex: none;
      margin: 5px 0 0 5px;
    }
    .tab {
      height: 21px;
      box-sizing: border-box;
      display: flex;
      align-items: center;
      border: 1px solid #d2d2d2;
      border-left: 0;
      border-bottom: 0;
      white-space: nowrap;
      gap: 4px;
    }
    .tab.fill {
      width: 38px;
      height: 23px;
      background: #fff;
      padding-left: 3px;
      gap: 5px;
      border-color: #e2e2e2;
    }
    .tab.paint {
      width: 79px;
      padding-left: 2px;
      letter-spacing: -0.4px;
    }
    .tab.style {
      width: 78px;
      padding-left: 3px;
      letter-spacing: -0.32px;
    }
    .tab svg {
      width: 9px;
      height: 10px;
      flex: none;
    }
    .body {
      flex: none;
      height: 259px;
      width: 290px;
      margin-left: 5px;
      background: #fff;
      border: 1px solid #ddd;
      border-top: 0;
      box-sizing: border-box;
    }
    .paints {
      display: flex;
      padding: 9px 0 0 8px;
    }
    .paints ink-icon {
      margin-right: 4.15px;
    }
    .paints .rule {
      margin: 0 -6px 0 10px;
    }
    .paints .rule + .rule {
      margin-left: 0;
    }
    .empty {
      font-weight: 700;
      font-size: 10.8px;
      padding: 10px 0 0 6px;
      letter-spacing: -0.15px;
    }
    .slider {
      display: flex;
      height: 21px;
      flex: none;
      margin: 5px 7px 0 5px;
      align-items: center;
    }
    .body + .slider {
      margin-top: 4px;
    }
    .track {
      flex: 1;
      display: flex;
      justify-content: space-between;
      align-items: center;
      height: 21px;
      box-sizing: border-box;
      border: 1px solid #aaa;
      border-right-color: #ddd;
      padding: 0 2px 0 5px;
      color: #777;
      letter-spacing: -0.25px;
    }
    .full .track {
      background: #b3c1ce;
      color: #111;
      border: 2px solid #fff;
      border-bottom: 2px solid #445;
      border-right: 2px solid #445;
      outline: 1px solid #aaa;
      outline-offset: -1px;
      padding: 0 0 0 4px;
    }
    .spin {
      width: 9px;
      height: 20px;
      margin-left: 3px;
    }
    .stack {
      margin-top: auto;
      display: grid;
      grid-auto-rows: 18.4px;
      row-gap: 3.2px;
      padding: 0 3px 0 3px;
      height: 103px;
      flex: none;
      overflow: hidden;
    }
    .row {
      display: flex;
      align-items: center;
      box-sizing: border-box;
      background: #dedede;
      border: 1px solid #adadad;
      padding-right: 6px;
    }
    .row.on {
      background: #cce4f9;
      border-color: #1d5a8c;
    }
    .row ink-icon {
      width: 18px;
      height: 18px;
      margin: 0 0 0 -2px;
    }
    .row .name {
      flex: 1;
    }
    .row svg {
      width: 7px;
      height: 4px;
    }
  `;

  rows = [
    ["align", "Align and Distribute (Shift+Ctrl+A)"],
    ["export", "Export PNG Image (Shift+Ctrl+E)"],
    ["brush", "Fill and Stroke (Shift+Ctrl+F)"],
    ["findIcon", "Find/Replace (Ctrl+F)"],
    ["layers", "Layers ()"],
  ];

  _slider(label: string, value: string, full: boolean) {
    return html`<div class=${classMap({ slider: true, full })}>
      <div class="track"><span>${label}</span><span>${value}</span></div>
      <svg class="spin" viewBox="0 0 9 20">
        <path d="M.5 .5H8.5V19.5H.5ZM.5 10H8.5" fill="#f4f4f4" stroke="#ccc" />
        <path d="M2 6.5H7L4.5 3.8ZM2 13.5H7L4.5 16.2Z" fill="#555" />
      </svg>
    </div>`;
  }

  render() {
    return html`
      <div class="head">
        <ink-icon name="brush"></ink-icon>
        <span class="name">Fill and Stroke (Shift+Ctrl+F)</span>
        <svg viewBox="0 0 13 12">
          <rect x="1.5" y="1" width="10" height="9.5" rx="1.5" fill="none" stroke="#666" />
          <path d="M4 5.8L8.5 3.3V8.3Z" fill="#444" />
        </svg>
        <svg viewBox="0 0 13 12">
          <rect x="1.5" y="1" width="10" height="9.5" rx="1.5" fill="none" stroke="#666" />
          <path d="M4 3.3L9 8.3M9 3.3L4 8.3" stroke="#444" stroke-width="1.7" />
        </svg>
      </div>
      <div class="tabs">
        <div class="tab fill">
          <svg viewBox="0 0 9 10"><path d="M0 0H8V8H0Z" fill="#b4c6da" /></svg>
          <span><u>F</u>ill</span>
        </div>
        <div class="tab paint">
          <svg viewBox="0 0 9 10"><path d="M.5 1.5H8M.5 1.5V9H7" fill="none" stroke="#777" /></svg>
          <span>Stroke paint</span>
        </div>
        <div class="tab style">
          <svg viewBox="0 0 9 10">
            <path d="M0 2.5H8M0 5.5H8M0 8.5H8" stroke="#555" stroke-width="1.1" />
            <path d="M6 .5L9 2.5L6 4.5Z" fill="#555" />
          </svg>
          <span>Stroke style</span>
        </div>
      </div>
      <div class="body">
        <div class="paints">
          ${["none", "flat", "linear", "radial", "meshFill", "patternFill", "swatchFill", "unset"].map(
            (name) => html`<ink-icon name=${name}></ink-icon>`
          )}
          <ink-icon class="rule" name="evenodd"></ink-icon>
          <ink-icon class="rule" name="nonzero"></ink-icon>
        </div>
        <div class="empty">No objects</div>
      </div>
      ${this._slider("Blur (%)", "0.0", false)} ${this._slider("Opacity (%)", "100.0", true)}
      <div class="stack">
        ${this.rows.map(
          ([icon, name]) => html`<div class=${classMap({ row: true, on: icon === "brush" })}>
            <ink-icon name=${icon}></ink-icon><span class="name">${name}</span>
            <svg viewBox="0 0 7 4"><path d="M0 4H7L3.5 0Z" fill=${icon === "brush" ? "#000" : "#555"} /></svg>
          </div>`
        )}
      </div>
    `;
  }
}

const PALETTE = (
  "000000 1a1a1a 333333 4d4d4d 666666 808080 999999 b3b3b3 cccccc e6e6e6 ececec f2f2f2 f9f9f9 ffffff " +
  "800000 ff0000 808000 ffff00 008000 00ff00 008080 00ffff 000080 0000ff 800080 ff00ff " +
  "2b0000 550000 800000 aa0000 d40000 ff0000 ff2a2a ff5555 ff8080 ffaaaa ffd5d5 " +
  "280b0b 501616 782121 a02c2c c83737 d35f5f de8787 e9afaf f4d7d7 " +
  "241c1c 483737 6c5353 916f6f ac9393 c8b7b7 e3dbdb " +
  "2b1100 552200 803300 aa4400 d45500 ff6600 ff7f2a ff9955 ffb380 ffccaa ffe6d5 " +
  "28170b 502d16 784421 a05a2c c87137 d38d5f deaa87 e9c6af f4e3d7 " +
  "241f1c 483e37 6c5d53 917c6f ac9d93 c8beb7 e3dedb " +
  "2b2200 554400 806600 aa8800 d4aa00 ffcc00 ffd42a ffdd55 ffe680 ffeeaa fff6d5 " +
  "28220b 504416 786721 a0892c c8ab37"
).split(" ");

const TOOLS =
  "pick node tweak zoom measure rect box3d ellipse star spiral pencil pen calligraphy textTool spray eraser bucket gradient mesh dropper connector".split(
    " "
  );

const TASKS =
  "hex everything explorer bridge inkscape word tower parrot excel folder film chrome clipStar monitors orangeSync xd greenNote chromeP graph recorder".split(
    " "
  );
const RUNNING = ["explorer", "inkscape", "chromeP", "graph", "recorder"];
const TRAY = "up clip dish eject sticky cal29 volume dropbox wifi battery".split(" ");

// [before, mnemonic, after]
const MENU = [
  ["", "F", "ile"],
  ["", "E", "dit"],
  ["", "V", "iew"],
  ["", "L", "ayer"],
  ["", "O", "bject"],
  ["", "P", "ath"],
  ["", "T", "ext"],
  ["Filter", "s", ""],
  ["Exte", "n", "sions"],
  ["", "H", "elp"],
];

@customElement("app-root")
class AppRoot extends LitElement {
  static styles = css`
    :host {
      display: grid;
      grid-template-rows: 21px 20px 28px 29px 29px 497px 16px 16px 26px 38px;
      width: 1280px;
      height: 720px;
      overflow: hidden;
      background: #fefefe;
      font-family: "Open Sans", "Noto Sans", sans-serif;
      font-size: 11.3px;
      letter-spacing: -0.1px;
      line-height: 1.2;
      color: #1c1c1c;
    }
    .title {
      display: flex;
      align-items: center;
      background: #0078d7;
      color: #e9f3fc;
      padding-left: 1px;
      letter-spacing: -0.33px;
    }
    .title ink-icon {
      width: 17px;
      height: 18px;
    }
    .title .name {
      flex: 1;
      padding-left: 4px;
    }
    .title .controls {
      width: 128px;
      height: 21px;
    }
    .menu {
      display: grid;
      grid-template-columns: 29px 32px 37px 39px 46px 36px 34px 42px 64px 40px;
      align-items: center;
      padding: 1px 0 0 8px;
      border-bottom: 1px solid #e4e4e4;
      letter-spacing: -0.36px;
    }
    u {
      text-underline-offset: 1.5px;
      text-decoration-thickness: 1px;
    }
    .bar {
      display: flex;
      align-items: center;
      padding-left: 2px;
      border-bottom: 1px solid #e4e4e4;
      box-sizing: border-box;
    }
    .field {
      display: flex;
      align-items: center;
      font-size: 10.6px;
      letter-spacing: -0.25px;
      color: #888;
      flex: none;
    }
    .field .label {
      padding-right: 4px;
      text-align: right;
      box-sizing: border-box;
    }
    .field .box {
      width: 43px;
      height: 19px;
      box-sizing: border-box;
      border: 1px solid #bbb;
      background: #f1f1f1;
      line-height: 17px;
      padding-left: 4px;
      white-space: nowrap;
      overflow: hidden;
    }
    .spin {
      width: 9px;
      height: 18px;
      flex: none;
    }
    .unit {
      display: flex;
      align-items: center;
      width: 40px;
      height: 18px;
      box-sizing: border-box;
      border: 1px solid #aaa;
      background: #fff;
      padding-left: 2px;
      justify-content: space-between;
      margin: 0 6px 0 2px;
      font-size: 10.4px;
      letter-spacing: -0.6px;
    }
    .drop {
      width: 14px;
      height: 100%;
      background: #e4e4e4;
      border-left: 1px solid #aaa;
      box-sizing: border-box;
    }
    .vsep {
      width: 1px;
      height: 15px;
      background: #b8b8b8;
      margin-right: 3px;
    }
    .work {
      display: grid;
      grid-template-columns: 28px 932px 303px 3px 9px 5px;
      min-height: 0;
      border-top: 1px solid #e4e4e4;
      margin-top: -1px;
      height: 497px;
    }
    .toolbox {
      display: flex;
      flex-direction: column;
      align-items: center;
      padding: 2px 2px 0 0;
    }
    .tool {
      width: 22px;
      height: 20.65px;
      display: flex;
      align-items: center;
      justify-content: center;
    }
    .tool.on {
      background: #cce4f9;
      outline: 1px solid #9acbf2;
      outline-offset: -0.5px;
    }
    .vscroll {
      display: flex;
      flex-direction: column;
      background: #f0f0f0;
    }
    .vscroll svg {
      width: 9px;
      height: 16px;
      flex: none;
    }
    .vscroll .thumb {
      height: 435px;
      background: #c9c9c9;
    }
    .vscroll .space {
      flex: 1;
    }
    .sliver svg {
      display: block;
      width: 5px;
      height: 497px;
    }
    .palette {
      display: flex;
      border-top: 1.5px solid #666;
      border-bottom: 2px solid #f8f8f8;
      box-sizing: border-box;
      padding-left: 1px;
      width: 1271px;
      overflow: hidden;
    }
    .nocolor {
      width: 14px;
      height: 13px;
      flex: none;
    }
    .swatch {
      width: 13.13px;
      flex: none;
    }
    .hscroll {
      display: flex;
      align-items: center;
      background: #ededed;
      padding: 0 9px 0 0;
      justify-content: space-between;
    }
    .hscroll .left {
      display: flex;
      align-items: center;
    }
    .hscroll svg {
      width: 16px;
      height: 14px;
    }
    .hscroll .thumb {
      width: 276px;
      height: 13px;
      background: #c8c8c8;
    }
    .status {
      display: flex;
      align-items: center;
      background: #ededed;
      font-size: 11px;
      white-space: nowrap;
    }
    .paint {
      display: grid;
      grid-template-columns: 65.5px 51px;
      line-height: 12.6px;
      font-size: 10.4px;
      padding-left: 2px;
    }
    .paint span:nth-child(even) {
      font-size: 10.8px;
      letter-spacing: -0.3px;
    }
    .opacity .label {
      color: #333;
    }
    .opacity .box {
      width: 35px;
      height: 20px;
      line-height: 18px;
      padding-left: 4px;
    }
    .line {
      width: 1px;
      height: 26px;
      background: #aaa;
    }
    .status ink-icon {
      width: 22px;
      height: 22px;
    }
    .status ink-icon + ink-icon {
      margin: 0 2px 0 -4px;
    }
    .layer {
      display: flex;
      align-items: center;
      justify-content: space-between;
      width: 64px;
      height: 25px;
      box-sizing: border-box;
      border: 1px solid #aaa;
      background: #fff;
      padding-left: 3px;
      font-size: 9.4px;
      font-weight: 700;
      letter-spacing: -0.2px;
    }
    .hint {
      flex: 1;
      padding-left: 2px;
      font-size: 11.1px;
      letter-spacing: -0.29px;
    }
    .coords {
      display: grid;
      grid-template-columns: 17px 45px;
      line-height: 12.8px;
      font-size: 10.4px;
      padding-left: 3px;
    }
    .coords .num {
      font: 10.8px/12.8px "Liberation Mono", monospace;
      letter-spacing: 0;
    }
    .zoombox {
      width: 44px;
      height: 20px;
      box-sizing: border-box;
      border: 1px solid #999;
      background: #fff;
      line-height: 18px;
      padding-left: 7px;
      margin-left: 3px;
      font-size: 10.6px;
      letter-spacing: -0.35px;
    }
    .taskbar {
      display: flex;
      background: #004275;
      color: #fff;
    }
    .sys,
    .task,
    .trayitem {
      display: flex;
      align-items: center;
      justify-content: center;
      flex: none;
      box-sizing: border-box;
    }
    .sys {
      width: 44.8px;
    }
    .task {
      width: 34.84px;
    }
    .sys + .task {
      margin-left: 3.2px;
    }
    .task.running {
      background: linear-gradient(#7fbdf0, #7fbdf0) center bottom / 26px 2px no-repeat;
    }
    .task.active {
      background: linear-gradient(#7fbdf0, #7fbdf0) center bottom / 100% 2px no-repeat, #075a9c;
    }
    .trayitem {
      width: 30px;
    }
    .up {
      margin-left: 2px;
    }
    .clock {
      display: flex;
      flex-direction: column;
      justify-content: center;
      align-items: center;
      line-height: 16.4px;
      font-size: 11.4px;
      letter-spacing: -0.3px;
      white-space: nowrap;
    }
    .lang {
      width: 34px;
    }
    .time {
      width: 61px;
    }
    .notif {
      padding: 6px 0 0 13px;
    }
  `;

  _spin() {
    return html`<svg class="spin" viewBox="0 0 9 18">
      <path d="M.5 .5H8.5V17.5H.5ZM.5 9H8.5" fill="#f6f6f6" stroke="#d5d5d5" />
      <path d="M2 6H7L4.5 3.3ZM2 12.2H7L4.5 14.9Z" fill="#666" />
    </svg>`;
  }

  _drop() {
    return html`<svg class="drop" viewBox="0 0 14 16">
      <path d="M3.5 6L7 9.8L10.5 6" fill="none" stroke="#555" stroke-width="1.1" />
    </svg>`;
  }

  _field(label: string, value: string, width: number) {
    return html`<div class="field">
      <span class="label" style=${styleMap({ width: `${width}px` })}>${label}:</span>
      <span class="box">${value}</span>${this._spin()}
    </div>`;
  }

  render() {
    return html`
      <div class="title">
        <ink-icon name="inkscape"></ink-icon>
        <span class="name">*New document 2 - Inkscape</span>
        <svg class="controls" viewBox="1152 0 128 21">
          <path
            d="M1167.5 10.5H1176.5M1210 7.5H1216.5V13.5H1210ZM1212 7.5V5.5H1218.5V11.5H1216.5M1253 6L1261.5 14M1261.5 6L1253 14"
            fill="none"
            stroke="#fff"
            stroke-width="1.1"
          />
        </svg>
      </div>
      <div class="menu">${MENU.map(([a, b, c]) => html`<span>${a}<u>${b}</u>${c}</span>`)}</div>
      <div class="bar"><ink-toolbar items=${SNAP_BAR}></ink-toolbar></div>
      <div class="bar"><ink-toolbar items=${COMMAND_BAR}></ink-toolbar></div>
      <div class="bar">
        <ink-toolbar items=${SELECT_BAR}></ink-toolbar>
        ${this._field("X", "94.989", 20)} ${this._field("Y", "231.844", 21)} ${this._field("W", "25.826", 26)}
        <ink-icon name="lock"></ink-icon>
        ${this._field("H", "18.561", 23)}
        <div class="unit"><span>mm</span>${this._drop()}</div>
        <div class="vsep"></div>
        <ink-toolbar items="scaleStroke *scaleCorner *scaleGrad *scalePattern"></ink-toolbar>
      </div>
      <div class="work">
        <div class="toolbox">
          ${TOOLS.map(
            (name) => html`<div class=${classMap({ tool: true, on: name === "pick" })}>
              <ink-icon name=${name}></ink-icon>
            </div>`
          )}
        </div>
        <ink-canvas></ink-canvas>
        <ink-dock></ink-dock>
        <div></div>
        <div class="vscroll">
          <svg viewBox="0 0 9 16"><path d="M1.5 10.5L4.5 7.5L7.5 10.5" fill="none" stroke="#aaa" stroke-width="1.4" /></svg>
          <div class="thumb"></div>
          <div class="space"></div>
          <svg viewBox="0 0 9 16"><path d="M1.5 6.5L5 10L8.5 6.5" fill="none" stroke="#444" stroke-width="1.6" /></svg>
        </div>
        <div class="sliver">
          <svg viewBox="0 0 5 497">
            <path d="M0 24.5H5M0 50.5H5M0 311.5H5" stroke="#ccc" />
            <path d="M0 35L5 42M0 320L5 328" stroke="#bbb" />
            <path d="M0 71L5 81H0M0 334L5 341" fill="none" stroke="#555" />
          </svg>
        </div>
      </div>
      <div class="palette">
        <svg class="nocolor" viewBox="0 0 14 13">
          <rect x=".5" y=".5" width="13" height="12" fill="#fff" stroke="#222" />
          <path d="M1.5 1.5L12.5 11.5M12.5 1.5L1.5 11.5" stroke="#7d1a28" stroke-width="1.2" />
        </svg>
        ${PALETTE.map((c) => html`<div class="swatch" style=${styleMap({ background: `#${c}` })}></div>`)}
      </div>
      <div class="hscroll">
        <div class="left">
          <svg viewBox="0 0 16 14"><path d="M9.5 4L6 7L9.5 10" fill="none" stroke="#aaa" stroke-width="1.3" /></svg>
          <div class="thumb"></div>
        </div>
        <svg viewBox="0 0 16 14"><path d="M8 3.5L12 7L8 10.5" fill="none" stroke="#333" stroke-width="1.7" /></svg>
      </div>
      <div class="status">
        <div class="paint"><span>Fill:</span><span>N/A</span><span>Stroke:</span><span>N/A</span></div>
        <div class="field opacity"><span class="label">O:</span><span class="box">0</span>${this._spin()}</div>
        <div class="line"></div>
        <ink-icon name="eye"></ink-icon>
        <ink-icon name="lock"></ink-icon>
        <div class="layer"><span>•Layer 1</span>${this._drop()}</div>
        <div class="hint"><b>Ctrl:</b> click to select in groups; drag to move hor/vert</div>
        <div class="line"></div>
        <div class="coords">
          <span>X:</span><span class="num">106.64</span><span>Y:</span><span class="num">244.95</span>
        </div>
        <span>Z:</span>
        <div class="zoombox">198%</div>
        ${this._spin()}
      </div>
      <div class="taskbar">
        ${["start", "search", "taskview"].map(
          (name) => html`<div class="sys"><ink-icon name=${name}></ink-icon></div>`
        )}
        ${TASKS.map(
          (name) => html`<div
            class=${classMap({ task: true, running: RUNNING.includes(name), active: name === "inkscape" })}
          >
            <ink-icon name=${name}></ink-icon>
          </div>`
        )}
        ${TRAY.map(
          (name) => html`<div class=${classMap({ trayitem: true, up: name === "up" })}>
            <ink-icon name=${name}></ink-icon>
          </div>`
        )}
        <div class="clock lang"><span>ENG</span><span>INTL</span></div>
        <div class="clock time"><span>7:41 AM</span><span>29-Mar-19</span></div>
        <div class="notif"><ink-icon name="notif"></ink-icon></div>
      </div>
    `;
  }
}
